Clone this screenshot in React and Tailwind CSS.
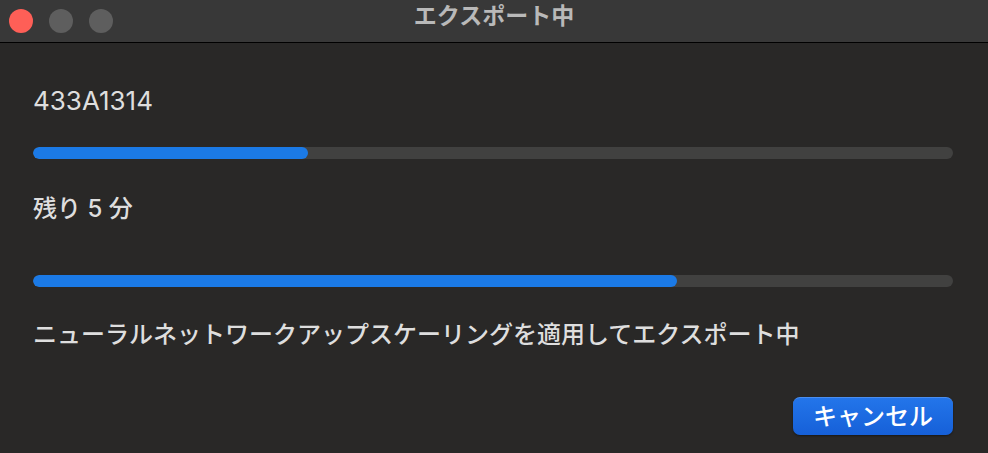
export default function App() {
  const jp = { fontFamily: 'Inter, "Noto Sans CJK JP", sans-serif' };

  return (
    <div className="w-[988px] h-[453px] bg-[#292827] flex flex-col overflow-hidden" style={jp}>
      <div className="relative h-[43px] bg-[#383838] flex items-center border-b border-black shrink-0">
        <div className="flex items-center gap-[16px] pl-[9px]">
          <span className="w-[24px] h-[24px] rounded-full bg-[#fe5f57]" />
          <span className="w-[24px] h-[24px] rounded-full bg-[#5e5e5e]" />
          <span className="w-[24px] h-[24px] rounded-full bg-[#5e5e5e]" />
        </div>
        <div className="absolute inset-x-0 top-0 h-[32px] flex items-center justify-center pointer-events-none">
          <span className="text-[23px] font-bold text-[#b9b9b9] leading-none">エクスポート中</span>
        </div>
      </div>

      <div className="flex flex-col pl-[33px] pr-[35px]">
        <div className="mt-[42px] h-[30px] flex items-center text-[26px] text-[#dedede]">433A1314</div>

        <div className="mt-[32px] h-[12px] rounded-full bg-[#414140] overflow-hidden">
          <div className="h-full w-[275px] rounded-full bg-[#1b7ae6]" />
        </div>

        <div className="mt-[35px] h-[30px] flex items-center text-[24px] font-medium text-[#dedede]">残り 5 分</div>

        <div className="mt-[51px] h-[12px] rounded-full bg-[#414140] overflow-hidden">
          <div className="h-full w-[644px] rounded-full bg-[#1b7ae6]" />
        </div>

        <div className="mt-[33px] h-[30px] flex items-center text-[24px] font-medium text-[#dedede]">
          ニューラルネットワークアップスケーリングを適用してエクスポート中
        </div>

        <div className="mt-[47px] flex justify-end">
          <button className="w-[160px] h-[38px] rounded-[7px] bg-gradient-to-b from-[#2375ea] to-[#1660d8] border-t border-[#4a8ef0] text-white text-[24px] font-medium leading-none flex items-center justify-center shadow-[0_1px_2px_rgba(0,0,0,0.4)]">
            キャンセル
          </button>
        </div>
      </div>
    </div>
  );
}
